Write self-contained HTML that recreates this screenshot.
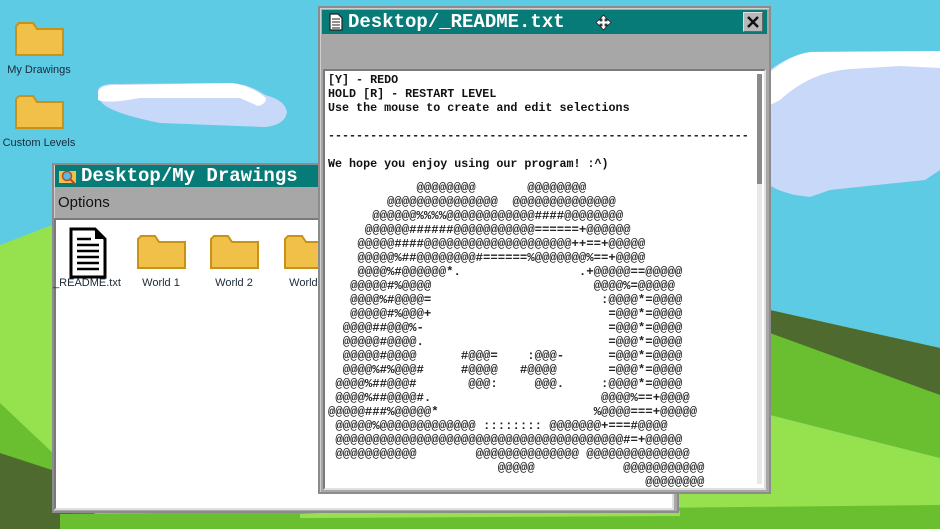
<!DOCTYPE html>
<html><head><meta charset="utf-8">
<style>
*{margin:0;padding:0;box-sizing:border-box}
body{width:940px;height:529px;overflow:hidden;position:relative;background:#5ccbe3;font-family:"Liberation Sans",sans-serif}
.abs{position:absolute}
.lbl{position:absolute;font-size:11px;color:#1a2a3a;text-align:center;width:90px}
.win{position:absolute;background:#a7a7a7;border:2px solid #8c8c8c;box-shadow:inset 1px 1px 0 #d0d0d0}
.title{position:absolute;background:#077b77;color:#fff;font-family:"Liberation Mono",monospace;font-weight:bold;font-size:19px;line-height:23px;white-space:pre}
.white{position:absolute;background:#fff;border:2px solid #7a7a7a;border-right-color:#e0e0e0;border-bottom-color:#e0e0e0}
.txt{position:absolute;font-family:"Liberation Mono",monospace;font-weight:bold;font-size:11.7px;line-height:14px;color:#111;white-space:pre}
.art{position:absolute;left:328px;top:181px;font-family:"Liberation Mono",monospace;font-weight:bold;font-size:12.3px;line-height:14px;color:#222;white-space:pre;letter-spacing:0}
.fl{position:absolute}
</style></head><body>
<svg class="abs" style="left:0;top:0" width="940" height="529">
<!-- clouds -->
<path d="M98,90 Q100,83 120,84 L230,83 Q250,84 265,95 Q285,100 287,112 Q285,125 265,127 L160,123 Q105,112 100,100Z" fill="#c8d8f8"/>
<path d="M98,92 Q100,84 120,85 L232,83 Q252,86 266,98 Q266,104 258,106 L240,98 L140,98 Q108,104 98,100Z" fill="#fff"/>
<path d="M770,70 Q790,55 810,52 L940,51 L940,170 L925,180 L830,190 L810,197 L795,195 Q775,190 770,185Z" fill="#c8d8f8"/>
<path d="M770,72 Q790,55 810,52 L940,51 L940,68 L900,66 L850,69 Q810,72 780,100 L770,105Z" fill="#fff"/>
<!-- hills -->
<path d="M0,245 L60,222 L400,300 L770,415 L940,458 L940,529 L0,529Z" fill="#96e24e"/>
<path d="M770,310 L940,348 L940,458 L770,415Z" fill="#6abf30"/>
<path d="M770,310 L940,348 L940,395 L770,333Z" fill="#4e6a2e"/>
<path d="M0,403 L55,455 L60,529 L0,529Z" fill="#6abf30"/>
<path d="M0,453 L52,470 L110,529 L0,529Z" fill="#4e6a2e"/>
<path d="M60,514 L940,505 L940,529 L60,529Z" fill="#6abf30"/>
<path d="M300,514 Q450,506 680,511 L680,516 L300,518Z" fill="#96e24e"/>
</svg>

<!-- desktop icons -->
<svg class="fl" style="left:15px;top:21px" width="50" height="36"><path d="M1,5 L1,34 L48,34 L48,8 L22,8 L18,2 L4,2Z" fill="#f0c048" stroke="#c89218" stroke-width="2"/></svg>
<div class="lbl" style="left:-6px;top:64px">My Drawings</div>
<svg class="fl" style="left:15px;top:94px" width="50" height="36"><path d="M1,5 L1,34 L48,34 L48,8 L22,8 L18,2 L4,2Z" fill="#f0c048" stroke="#c89218" stroke-width="2"/></svg>
<div class="lbl" style="left:-6px;top:137px">Custom Levels</div>

<!-- drawings window -->
<div class="win" style="left:52px;top:163px;width:627px;height:350px"></div>
<div class="title" style="left:55px;top:165px;width:300px;height:22px;padding-left:26px">Desktop/My Drawings</div>
<svg class="fl" style="left:58px;top:168px" width="20" height="17"><rect x="1" y="3" width="17" height="12" fill="#f0c048"/><circle cx="9" cy="8" r="4.5" fill="#5ab8e8" stroke="#b0501a" stroke-width="1.5"/><line x1="12" y1="11" x2="17" y2="16" stroke="#b0501a" stroke-width="2"/></svg>
<div class="abs" style="left:58px;top:194px;font-size:15px;color:#111">Options</div>
<div class="white" style="left:54px;top:218px;width:620px;height:292px"></div>
<svg class="fl" style="left:69px;top:227px" width="38" height="52"><path d="M2,2 L26,2 L36,12 L36,50 L2,50Z" fill="#fff" stroke="#000" stroke-width="3"/><path d="M26,2 L26,12 L36,12" fill="#000"/><g stroke="#000" stroke-width="2.5"><line x1="8" y1="12" x2="22" y2="12"/><line x1="8" y1="18" x2="30" y2="18"/><line x1="8" y1="24" x2="30" y2="24"/><line x1="8" y1="30" x2="30" y2="30"/><line x1="8" y1="36" x2="30" y2="36"/><line x1="8" y1="42" x2="30" y2="42"/></g></svg>
<div class="lbl" style="left:42px;top:277px">_README.txt</div>
<svg class="fl" style="left:137px;top:234px" width="50" height="36"><path d="M1,5 L1,34 L48,34 L48,8 L22,8 L18,2 L4,2Z" fill="#f0c048" stroke="#c89218" stroke-width="2"/></svg>
<div class="lbl" style="left:116px;top:277px">World 1</div>
<svg class="fl" style="left:210px;top:234px" width="50" height="36"><path d="M1,5 L1,34 L48,34 L48,8 L22,8 L18,2 L4,2Z" fill="#f0c048" stroke="#c89218" stroke-width="2"/></svg>
<div class="lbl" style="left:189px;top:277px">World 2</div>
<svg class="fl" style="left:284px;top:234px" width="50" height="36"><path d="M1,5 L1,34 L48,34 L48,8 L22,8 L18,2 L4,2Z" fill="#f0c048" stroke="#c89218" stroke-width="2"/></svg>
<div class="lbl" style="left:263px;top:277px">World 3</div>

<!-- readme window -->
<div class="win" style="left:318px;top:6px;width:453px;height:488px"></div>
<div class="title" style="left:322px;top:10px;width:445px;height:24px;padding-left:26px;line-height:24px">Desktop/_README.txt</div>
<svg class="fl" style="left:329px;top:13px" width="14" height="18"><path d="M1,1 L9,1 L13,5 L13,17 L1,17Z" fill="#fff" stroke="#222" stroke-width="1.2"/><g stroke="#222"><line x1="3" y1="6" x2="11" y2="6"/><line x1="3" y1="9" x2="11" y2="9"/><line x1="3" y1="12" x2="11" y2="12"/><line x1="3" y1="15" x2="11" y2="15"/></g></svg>
<svg class="fl" style="left:595px;top:14px" width="17" height="17"><path d="M8.5,1 L12,5 L10,5 L10,7 L12,7 L12,5 L16,8.5 L12,12 L12,10 L10,10 L10,12 L12,12 L8.5,16 L5,12 L7,12 L7,10 L5,10 L5,12 L1,8.5 L5,5 L5,7 L7,7 L7,5 L5,5Z" fill="#fff" stroke="#222" stroke-width="0.8"/></svg>
<div class="abs" style="left:743px;top:12px;width:20px;height:20px;background:#b8b8b8;border:1px solid #ddd;border-right-color:#666;border-bottom-color:#666"></div>
<svg class="fl" style="left:745px;top:14px" width="16" height="16"><path d="M3,3 L13,13 M13,3 L3,13" stroke="#111" stroke-width="2.5"/></svg>
<div class="white" style="left:323px;top:69px;width:443px;height:421px"></div>
<div class="abs" style="left:757px;top:74px;width:5px;height:410px;background:#e8e8e8"></div>
<div class="abs" style="left:757px;top:74px;width:5px;height:110px;background:#8a8a8a"></div>
<div class="txt" style="left:328px;top:73px">[Y] - REDO
HOLD [R] - RESTART LEVEL
Use the mouse to create and edit selections

------------------------------------------------------------

We hope you enjoy using our program! :^)</div>
<div class="art">            @@@@@@@@       @@@@@@@@
        @@@@@@@@@@@@@@@  @@@@@@@@@@@@@@
      @@@@@@%%%%@@@@@@@@@@@@####@@@@@@@@
     @@@@@@######@@@@@@@@@@@======+@@@@@@
    @@@@@####@@@@@@@@@@@@@@@@@@@@++==+@@@@@
    @@@@@%##@@@@@@@@#======%@@@@@@@%==+@@@@
    @@@@%#@@@@@@*.                .+@@@@@==@@@@@
   @@@@@#%@@@@                      @@@@%=@@@@@
   @@@@%#@@@@=                       :@@@@*=@@@@
   @@@@@#%@@@+                        =@@@*=@@@@
  @@@@##@@@%-                         =@@@*=@@@@
  @@@@@#@@@@.                         =@@@*=@@@@
  @@@@@#@@@@      #@@@=    :@@@-      =@@@*=@@@@
  @@@@%#%@@@#     #@@@@   #@@@@       =@@@*=@@@@
 @@@@%##@@@#       @@@:     @@@.     :@@@@*=@@@@
 @@@@%##@@@@#.                       @@@@%==+@@@@
@@@@@###%@@@@@*                     %@@@@===+@@@@@
 @@@@@%@@@@@@@@@@@@@ :::::::: @@@@@@@+===#@@@@
 @@@@@@@@@@@@@@@@@@@@@@@@@@@@@@@@@@@@@@@#=+@@@@@
 @@@@@@@@@@@        @@@@@@@@@@@@@@ @@@@@@@@@@@@@@
                       @@@@@            @@@@@@@@@@@
                                           @@@@@@@@</div>
</body></html>
